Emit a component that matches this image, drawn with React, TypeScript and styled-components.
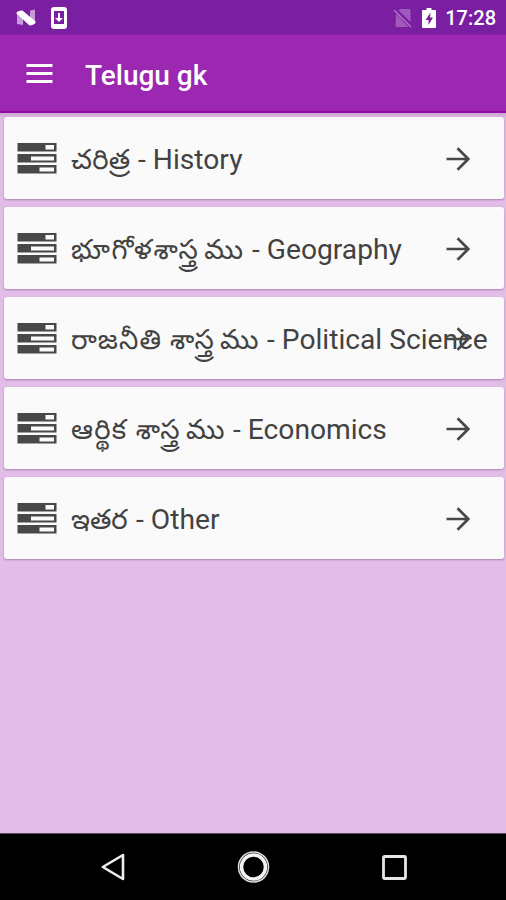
import React from "react";
import styled, { createGlobalStyle } from "styled-components";

const GlobalStyle = createGlobalStyle`
  * { box-sizing: border-box; }
  body { margin: 0; background: #e2bde7; font-family: Roboto, "Noto Sans Telugu", "Noto Sans", sans-serif; }
`;

const Screen = styled.div`
  display: flex;
  flex-direction: column;
  height: 900px;
  width: 506px;
  overflow: hidden;
  background: #e2bde7;
`;

const StatusBar = styled.header`
  flex: none;
  height: 35px;
  display: flex;
  align-items: center;
  justify-content: space-between;
  padding: 0 10px 0 15px;
  background: linear-gradient(#7b1fa2 33px, #8a21a8);
  color: #fff;
`;

const StatusGroup = styled.div<{ $gap: number }>`
  display: flex;
  align-items: center;
  gap: ${(p) => p.$gap}px;
`;

const Clock = styled.time`
  font-size: 20px;
  font-weight: 500;
  line-height: 35px;
  padding-top: 2px;
`;

const Toolbar = styled.div`
  flex: none;
  height: 78px;
  display: flex;
  align-items: center;
  gap: 32px;
  padding: 2px 26px 0;
  background: #9c27b0;
  border-bottom: 2px solid #910ca6;
  color: #fff;
`;

const Title = styled.h1`
  margin: 0;
  padding-top: 3px;
  font-size: 28px;
  font-weight: 500;
  line-height: 34px;
  white-space: nowrap;
`;

const List = styled.ul`
  flex: 1;
  margin: 0;
  padding: 4px 2px 0 4px;
  list-style: none;
  display: flex;
  flex-direction: column;
  gap: 8px;
  background: linear-gradient(#cba6cf, #e2bde7 6px);
`;

const Card = styled.li`
  position: relative;
  flex: none;
  height: 82px;
  display: flex;
  align-items: center;
  padding-left: 13px;
  border-radius: 3px;
  background: #fafafa;
  box-shadow: 0 1px 2px rgba(90, 30, 100, 0.38);
  color: #424242;
`;

const Label = styled.span`
  display: flex;
  align-items: baseline;
  margin-left: 14px;
  padding-top: 3px;
  font-size: 28.2px;
  line-height: 40px;
  white-space: nowrap;
`;

const Native = styled.span<{ $width: number; $tracking: number }>`
  flex: none;
  width: ${(p) => p.$width}px;
  font-size: 27.5px;
  letter-spacing: ${(p) => p.$tracking}px;
`;

const Suffix = styled.span`
  margin-left: 5px;
`;

const ArrowSlot = styled.span`
  position: absolute;
  right: 34px;
  top: 30px;
  display: flex;
`;

const NavBar = styled.nav`
  flex: none;
  height: 67px;
  display: flex;
  align-items: center;
  justify-content: space-between;
  padding: 0 99px 0 101px;
  background: #000;
  border-top: 1px solid #59455c;
`;

const topics = [
  { stem: "చరిత్ర", english: "History", width: 67, tracking: 0.3 },
  { stem: "భూగోళశాస్త్ర", suffix: "ము", english: "Geography", width: 181, tracking: 1.6 },
  { stem: "రాజనీతి శాస్త్ర", suffix: "ము", english: "Political Science", width: 196, tracking: 1.1 },
  { stem: "ఆర్థిక శాస్త్ర", suffix: "ము", english: "Economics", width: 162, tracking: 1.3 },
  { stem: "ఇతర", english: "Other", width: 65, tracking: 0 },
];

const NougatIcon = () => (
  <svg width="22" height="18" viewBox="0 0 22 18">
    <path d="M2 3.500 8 5v11l-6-1z" fill="#c79bd8" />
    <path d="M15 1.500 20 .5V15l-5-1z" fill="#c79bd8" />
    <path d="M1 4Q3 1 7.500 1.500L21 13Q18.500 16.500 14.500 16.500z" fill="#fff" />
  </svg>
);

const DownloadIcon = () => (
  <svg width="18" height="24" viewBox="0 0 18 24">
    <rect x="1" y="1" width="16" height="22" rx="3" fill="#fff" />
    <path d="M4 5h10v13H4z" fill="#7b1fa2" />
    <path d="M8 7h2v5h3l-4 4-4-4h3z" fill="#fff" />
  </svg>
);

const NoSimIcon = () => (
  <svg width="20" height="20" viewBox="0 0 20 20">
    <path d="M7 1h9q1.500 0 1.500 1.500V14L5.500 2.500zM3 5.500 15.500 19H4q-1.500 0-1.500-1.500z" fill="#a05abb" />
    <path d="m1 2 17 17" stroke="#b174c9" strokeWidth="1.500" />
  </svg>
);

const BatteryIcon = () => (
  <svg width="14" height="20" viewBox="0 0 14 20">
    <path d="M4.500 0h5v2H13q1 0 1 1v16q0 1-1 1H1q-1 0-1-1V3q0-1 1-1h3.500z" fill="#fff" />
    <path d="M8.500 4.500 3.500 12h3v5l4.500-7.500H8z" fill="#7b1fa2" />
  </svg>
);

const MenuIcon = () => (
  <svg width="27" height="20" viewBox="0 0 27 20">
    <path d="M.5 1.500h26M.5 9.500h26M.5 17.500h26" stroke="#fff" strokeWidth="2.800" />
  </svg>
);

const BarsIcon = () => (
  <svg width="40" height="32" viewBox="0 0 40 32">
    <path d="M.5 1h39v8.500H.5zM.5 12h39v8.500H.5zM.5 23h39v8.500H.5z" fill="#484848" />
    <path d="M28.500 3H37v4.500h-8.500zM14 14.500h23V18.500H14zM22.500 25.500H37V29.500H22.500z" fill="#fafafa" />
  </svg>
);

const ArrowIcon = () => (
  <svg width="24" height="24" viewBox="0 0 24 24" fill="none" stroke="#484848" strokeWidth="2.700">
    <path d="M.5 12H22M11.500 1.200 22.300 12 11.500 22.800" />
  </svg>
);

const BackIcon = () => (
  <svg width="24" height="28" viewBox="0 0 24 28">
    <path d="M22 2v24L1.800 14z" fill="none" stroke="#eee" strokeWidth="2.600" strokeLinejoin="round" />
  </svg>
);

const HomeIcon = () => (
  <svg width="34" height="34" viewBox="0 0 34 34" fill="none">
    <circle cx="16.500" cy="17" r="15" stroke="#ddd" strokeWidth="1.500" />
    <circle cx="16.500" cy="17" r="12" stroke="#f4f4f4" strokeWidth="3.500" />
  </svg>
);

const RecentIcon = () => (
  <svg width="25" height="25" viewBox="0 0 25 25">
    <rect x="1.500" y="1.500" width="22" height="22" rx="1" fill="none" stroke="#e6e6e6" strokeWidth="2.800" />
  </svg>
);

export default function App() {
  return (
    <>
      <GlobalStyle />
      <Screen>
        <StatusBar>
          <StatusGroup $gap={13}>
            <NougatIcon />
            <DownloadIcon />
          </StatusGroup>
          <StatusGroup $gap={9}>
            <NoSimIcon />
            <BatteryIcon />
            <Clock>17:28</Clock>
          </StatusGroup>
        </StatusBar>
        <Toolbar>
          <MenuIcon />
          <Title>Telugu gk</Title>
        </Toolbar>
        <List>
          {topics.map((topic) => (
            <Card key={topic.english}>
              <BarsIcon />
              <Label>
                <Native $width={topic.width} $tracking={topic.tracking} lang="te">
                  {topic.stem}
                  {topic.suffix && <Suffix>{topic.suffix}</Suffix>}
                </Native>
                <span>- {topic.english}</span>
              </Label>
              <ArrowSlot>
                <ArrowIcon />
              </ArrowSlot>
            </Card>
          ))}
        </List>
        <NavBar>
          <BackIcon />
          <HomeIcon />
          <RecentIcon />
        </NavBar>
      </Screen>
    </>
  );
}
